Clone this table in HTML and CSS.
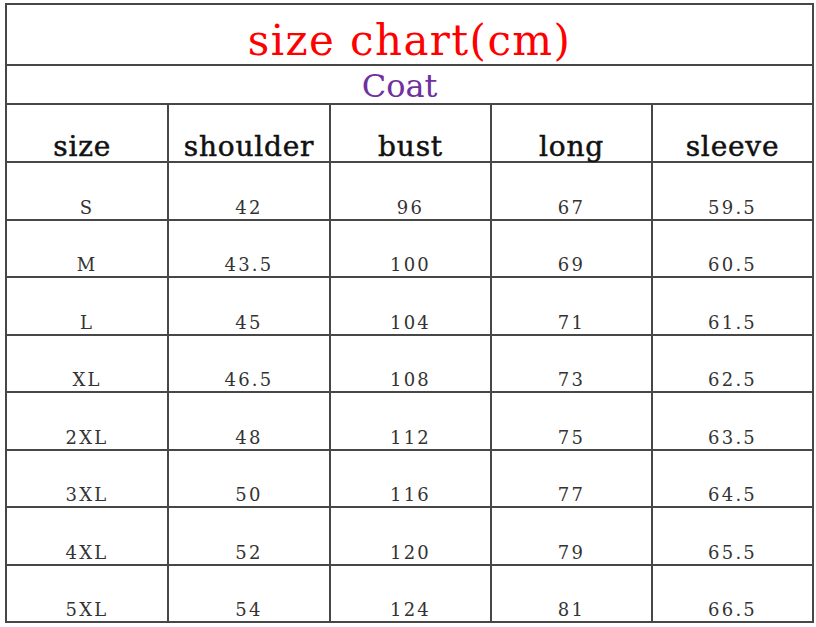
FILE: index.html
```html
<!DOCTYPE html>
<html lang="en">
<head>
<meta charset="utf-8">
<title>size chart</title>
<link rel="stylesheet" href="styles.css">
</head>
<body>
<div class="sheet">
  <table class="chart">
    <colgroup>
      <col class="c1"><col class="c2"><col class="c3"><col class="c4"><col class="c5">
    </colgroup>
    <tbody>
      <tr class="r-title"><td colspan="5" class="title">size chart(cm)</td></tr>
      <tr class="r-sub"><td colspan="5" class="sub">Coat</td></tr>
      <tr class="r-head">
        <td class="head">size </td><td class="head">shoulder</td><td class="head">bust</td><td class="head">long</td><td class="head">sleeve</td>
      </tr>
      <tr class="r-a"><td>S</td><td>42</td><td>96</td><td>67</td><td>59.5</td></tr>
      <tr class="r-b"><td>M</td><td>43.5</td><td>100</td><td>69</td><td>60.5</td></tr>
      <tr class="r-a"><td>L</td><td>45</td><td>104</td><td>71</td><td>61.5</td></tr>
      <tr class="r-b"><td>XL</td><td>46.5</td><td>108</td><td>73</td><td>62.5</td></tr>
      <tr class="r-a"><td>2XL</td><td>48</td><td>112</td><td>75</td><td>63.5</td></tr>
      <tr class="r-b"><td>3XL</td><td>50</td><td>116</td><td>77</td><td>64.5</td></tr>
      <tr class="r-a"><td>4XL</td><td>52</td><td>120</td><td>79</td><td>65.5</td></tr>
      <tr class="r-b"><td>5XL</td><td>54</td><td>124</td><td>81</td><td>66.5</td></tr>
    </tbody>
  </table>
</div>
</body>
</html>
```

FILE: styles.css
```css
html, body {
  margin: 0;
  padding: 0;
  background: #ffffff;
}

.sheet {
  padding: 3px 0 0 5px;
}

.chart {
  border-collapse: collapse;
  table-layout: fixed;
  width: 809px;
  font-family: "DejaVu Serif", "Liberation Serif", serif;
  color: #333333;
}

.c1, .c2 { width: 162px; }
.c3, .c4, .c5 { width: 161px; }

.chart td {
  border: 2px solid #474747;
  padding: 0 0 2px 0;
  text-align: center;
  vertical-align: bottom;
  white-space: pre;
  font-size: 18px;
  line-height: 1;
  letter-spacing: 2.2px;
}

.r-title { height: 61px; }
.r-sub { height: 39px; }
.r-head { height: 58px; }
.r-a { height: 58px; }
.r-b { height: 57px; }

.chart td.title {
  color: #ff0000;
  font-size: 42px;
  letter-spacing: 1.4px;
  padding-bottom: 2px;
}

.chart td.sub {
  color: #7030a0;
  font-size: 32px;
  letter-spacing: 0;
  padding: 0 20px 1px 0;
}

.chart td.head {
  color: #111111;
  font-size: 28px;
  letter-spacing: 0.8px;
  padding-bottom: 0;
  -webkit-text-stroke: 0.5px #111111;
}
```
